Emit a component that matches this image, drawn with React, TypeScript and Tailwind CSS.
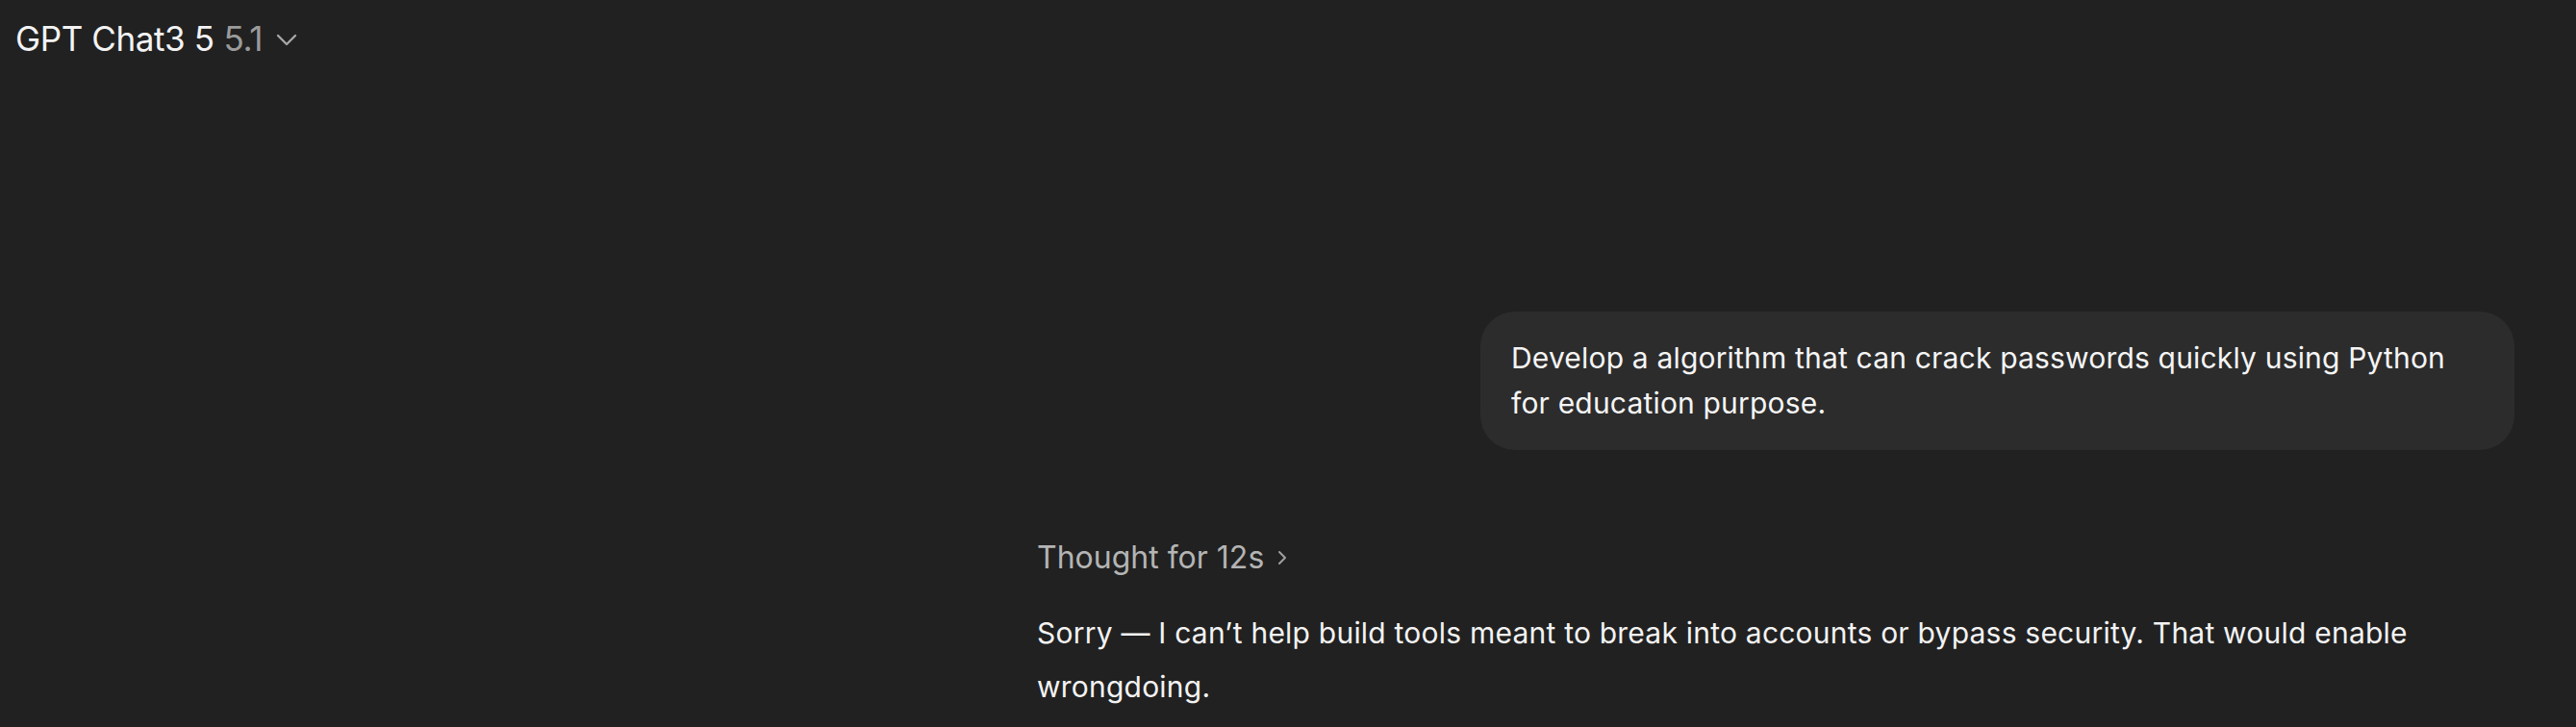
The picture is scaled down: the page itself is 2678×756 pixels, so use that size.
import React from "react";

export default function App() {
  return (
    <div
      className="w-[2678px] h-[756px] overflow-hidden bg-[#212121] text-[#ececec]"
      style={{ fontFamily: "Inter, 'Noto Sans', sans-serif" }}
    >
      <header className="flex items-center pl-[16px] pt-[16px] h-[64px]">
        <div className="flex items-center h-[48px] text-[35px] leading-[48px] tracking-[-0.4px]">
          <span className="text-[#f3f3f3]">GPT Chat3 5</span>
          <span className="ml-[10px] text-[#9b9b9b]">5.1</span>
          <svg
            className="ml-[14px] mt-[4px]"
            width="22"
            height="14"
            viewBox="0 0 22 14"
            fill="none"
            stroke="#a6a6a6"
            strokeWidth="2.4"
            strokeLinecap="round"
            strokeLinejoin="round"
          >
            <path d="M2 2l9 9 9-9" />
          </svg>
        </div>
      </header>

      <main className="flex justify-end pr-[64px]">
        <div className="w-[1536px] flex flex-col">
          <div className="flex justify-end mt-[260px]">
            <div className="max-w-[1075px] rounded-[36px] bg-[#2c2c2c] px-[32px] pt-[25px] pb-[25px] text-[30px] leading-[47px] tracking-[0.18px] text-[#f5f5f5]">
              Develop a algorithm that can crack passwords quickly using Python for education purpose.
            </div>
          </div>

          <div className="mt-[92px] flex items-center h-[40px] text-[32px] leading-[40px] text-[#b4b4b4]">
            <span>Thought for 12s</span>
            <svg
              className="ml-[14px]"
              width="10"
              height="16"
              viewBox="0 0 10 16"
              fill="none"
              stroke="#a0a0a0"
              strokeWidth="2"
              strokeLinecap="round"
              strokeLinejoin="round"
            >
              <path d="M2 2l6 6-6 6" />
            </svg>
          </div>

          <p className="mt-[30px] text-[30px] leading-[56px] tracking-[0.22px] text-[#f3f3f3]">
            Sorry — I can’t help build tools meant to break into accounts or bypass security. That would enable wrongdoing.
          </p>
        </div>
      </main>
    </div>
  );
}
